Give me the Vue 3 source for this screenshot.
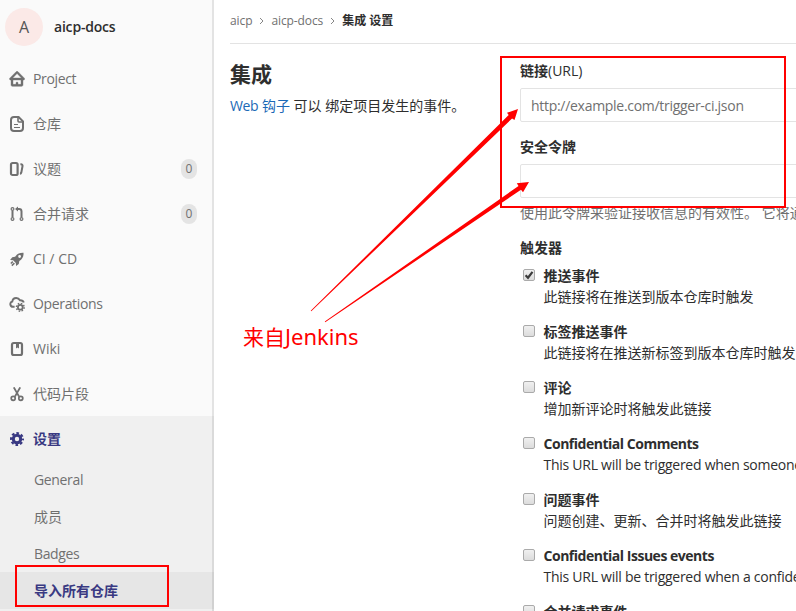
<script setup>
const nav = [
  { label: 'Project', icon: 'home', latin: true },
  { label: '仓库', icon: 'doc' },
  { label: '议题', icon: 'issues', count: 0 },
  { label: '合并请求', icon: 'merge', count: 0 },
  { label: 'CI / CD', icon: 'rocket' },
  { label: 'Operations', icon: 'cloud', latin: true },
  { label: 'Wiki', icon: 'book' },
  { label: '代码片段', icon: 'snippet' },
]
const sub = [
  { label: 'General', latin: true },
  { label: '成员' },
  { label: 'Badges', latin: true },
  { label: '导入所有仓库', active: true },
]
const triggers = [
  { title: '推送事件', text: '此链接将在推送到版本仓库时触发', checked: true },
  { title: '标签推送事件', text: '此链接将在推送新标签到版本仓库时触发' },
  { title: '评论', text: '增加新评论时将触发此链接' },
  { title: 'Confidential Comments', text: 'This URL will be triggered when someone', latin: true },
  { title: '问题事件', text: '问题创建、更新、合并时将触发此链接' },
  { title: 'Confidential Issues events', text: 'This URL will be triggered when a confide', latin: true },
  { title: '合并请求事件', text: '' },
]
</script>

<template>
  <div class="page">
    <aside class="sidebar">
      <div class="project">
        <span class="avatar">A</span>
        <span class="project-name">aicp-docs</span>
      </div>
      <nav>
        <a v-for="item in nav" :key="item.label" class="nav-item">
          <svg class="icon" viewBox="0 0 16 16">
            <path v-if="item.icon === 'home'" class="heavy" fill-rule="evenodd" d="M3.706 7h8.725L8.069 2.585 3.706 7zM7 13.369V12a1 1 0 0 1 2 0v1.369h3V9H4v4.369h3zM14 9v4.836c0 .833-.657 1.533-1.500 1.533h-9c-.843 0-1.500-.7-1.500-1.533V9h-.448a1.100 1.100 0 0 1-.783-1.873L6.934.887a1.500 1.500 0 0 1 2.269 0l6.165 6.240A1.100 1.100 0 0 1 14.585 9H14z" />
            <g v-else-if="item.icon === 'doc'" class="line">
              <path d="M5 1h4.600L14 5.400V12a3 3 0 0 1-3 3H5a3 3 0 0 1-3-3V4a3 3 0 0 1 3-3z" stroke-width="2" />
              <path d="M9 1.500V5a1 1 0 0 0 1 1h3.500" stroke-width="1.600" />
              <path d="M5 8.500h4M5 11.500h6" stroke-width="1.100" />
            </g>
            <g v-else-if="item.icon === 'issues'" class="line">
              <rect x="2" y="2" width="6.600" height="12" rx="1.600" stroke-width="2.200" />
              <path d="M11.400 3.200h.6a1.600 1.600 0 0 1 1.500 2l-1.200 6.400a2 2 0 0 1-1.200 1.400" stroke-width="2" />
            </g>
            <g v-else-if="item.icon === 'merge'" class="line">
              <path d="M3.500 5v6M12.500 11V5.400A2.400 2.400 0 0 0 10.100 3H8.500" stroke-width="2" />
              <circle cx="3.500" cy="3" r="1.400" stroke-width="1.200" />
              <circle cx="3.500" cy="13" r="1.400" stroke-width="1.200" />
              <circle cx="12.500" cy="13" r="1.400" stroke-width="1.200" />
              <path class="solid" d="M9 .4v5.200L6 3z" />
            </g>
            <g v-else-if="item.icon === 'rocket'">
              <path fill-rule="evenodd" d="M14.500 1.800c-3.600-.2-6.600 1-8.400 4L3.300 6.200 1.100 9l3 .2 2.700 2.700.3 3 2.700-2 .5-2.800C13.300 8.200 14.800 5.400 14.500 1.800zm-3.900 5.100a1.400 1.400 0 1 1 0-2.800 1.400 1.400 0 0 1 0 2.800z" />
              <path class="line" d="M3.800 10.600l-2 1.900M5.400 12.100l-2.600 2.500" stroke-width="1.500" />
            </g>
            <g v-else-if="item.icon === 'cloud'">
              <path class="line" d="M5.600 10.800H4.100A2.700 2.700 0 0 1 3.300 5.500C3.700 2.800 5.600 2 7.200 2c1.800 0 3 .9 3.700 2.200 2-.1 3.400.7 3.900 2.300" stroke-width="1.900" />
              <circle class="line" cx="11.300" cy="11.300" r="2.400" stroke-width="1.800" />
              <circle class="line" cx="11.300" cy="11.300" r="3.900" stroke-width="1.400" stroke-dasharray="1.550 1.513" />
            </g>
            <g v-else-if="item.icon === 'book'">
              <rect class="line" x="3" y="2" width="10" height="12" rx="1.800" stroke-width="2.200" />
              <path d="M7 2h3v5.600L8.500 6.400 7 7.600z" />
            </g>
            <g v-else class="line">
              <path d="M4.800 1.400l5.300 9.200M11.200 1.400L5.900 10.600" stroke-width="1.900" />
              <circle cx="4.200" cy="12.300" r="2" stroke-width="1.700" />
              <circle cx="11.800" cy="12.300" r="2" stroke-width="1.700" />
            </g>
          </svg>
          <span :class="{ latin: item.latin }">{{ item.label }}</span>
          <span v-if="item.count !== undefined" class="count">{{ item.count }}</span>
        </a>
      </nav>
      <section class="settings">
        <a class="nav-item current">
          <svg class="icon" viewBox="0 0 16 16">
            <circle class="line" cx="8" cy="8" r="3.700" stroke-width="3" />
            <circle class="line" cx="8" cy="8" r="5.900" stroke-width="2.200" stroke-dasharray="2.600 2.034" stroke-dashoffset="1.300" />
          </svg>
          <span>设置</span>
        </a>
        <a v-for="item in sub" :key="item.label" class="sub-item" :class="{ active: item.active, latin: item.latin }">{{ item.label }}</a>
      </section>
    </aside>

    <main class="content">
      <header class="crumbs">
        <span>aicp</span>
        <svg class="chevron" viewBox="0 0 5 8"><path d="M1 1l3 3-3 3" /></svg>
        <span>aicp-docs</span>
        <svg class="chevron" viewBox="0 0 5 8"><path d="M1 1l3 3-3 3" /></svg>
        <strong>集成 设置</strong>
      </header>
      <div class="columns">
        <section class="intro">
          <h1>集成</h1>
          <p><a><span class="latin">Web</span> 钩子</a> 可以 绑定项目发生的事件。</p>
        </section>
        <form class="form">
          <label class="label">链接<span class="semi">(URL)</span></label>
          <input class="field" placeholder="http://example.com/trigger-ci.json" />
          <label class="label second">安全令牌</label>
          <input class="field" />
          <p class="help">使用此令牌来验证接收信息的有效性。 它将通</p>
          <div class="label triggers">触发器</div>
          <div v-for="t in triggers" :key="t.title" class="trigger" :class="{ english: t.latin }">
            <span class="box">
              <svg v-if="t.checked" viewBox="0 0 10 10"><path d="M1.600 5.200l2.400 2.500L8.500 1.800" /></svg>
            </span>
            <div>
              <div class="trigger-title">{{ t.title }}</div>
              <div class="trigger-text">{{ t.text }}</div>
            </div>
          </div>
        </form>
      </div>
    </main>

    <svg class="marks" viewBox="0 0 796 611">
      <rect x="501" y="57" width="284" height="150" />
      <rect x="16" y="566" width="152" height="40" />
      <path d="M310.700 310.700L508.700 115 507 112.800 518 109 514.500 120 512.100 118.400 311.300 311.300z" />
      <path d="M324.800 321.600L518.500 186 516.800 183.300 529 182 523 192.300 521 189.700 325.200 322.200z" />
    </svg>
    <div class="note">来自<span class="note-name">Jenkins</span></div>
  </div>
</template>

<style>
body {
  overflow: hidden;
}
</style>

<style scoped>
.page {
  position: relative;
  display: flex;
  width: 796px;
  height: 611px;
  overflow: hidden;
  background: #fff;
  color: #2e2e2e;
  font: 14px/20px "Open Sans", "Noto Sans CJK SC", sans-serif;
}
.sidebar {
  box-sizing: border-box;
  flex: none;
  width: 214px;
  background: #fafafa;
  box-shadow: inset -2px 0 0 #e3e3e3;
}
.project {
  display: flex;
  align-items: center;
  gap: 11px;
  height: 52px;
  padding: 1px 0 0 5px;
  box-sizing: border-box;
  margin-bottom: 4px;
}
.avatar {
  width: 38px;
  height: 38px;
  border-radius: 50%;
  background: #fbe9e7;
  color: #555;
  font-size: 16px;
  font-weight: 500;
  line-height: 38px;
  text-align: center;
}
.project-name {
  padding-top: 1px;
  font-weight: 600;
  font-size: 14px;
  letter-spacing: -0.2px;
}
.nav-item {
  display: flex;
  align-items: center;
  height: 45px;
  padding: 0 17px 0 9px;
  color: #707070;
}
.latin {
  letter-spacing: -0.35px;
}
.icon {
  width: 16px;
  height: 16px;
  margin-right: 8px;
  fill: currentColor;
}
.heavy {
  stroke: currentColor;
  stroke-width: 0.4;
}
.line {
  fill: none;
  stroke: currentColor;
}
.solid {
  fill: currentColor;
  stroke: none;
}
.count {
  width: 16px;
  height: 20px;
  margin-left: auto;
  border-radius: 8px;
  background: #e4e4e4;
  font-size: 12px;
  text-align: center;
}
.settings {
  height: 195px;
  background: rgba(0, 0, 0, 0.04);
}
.current {
  color: #393982;
  font-weight: 600;
}
.sub-item {
  display: block;
  height: 37px;
  padding-left: 34px;
  color: #707070;
  line-height: 38px;
}
.sub-item.active {
  background: rgba(0, 0, 0, 0.04);
  color: #393982;
  font-weight: 600;
}
.content {
  flex: none;
  width: 582px;
  overflow: hidden;
  padding-left: 16px;
  box-sizing: border-box;
}
.crumbs {
  display: flex;
  align-items: center;
  height: 43px;
  padding-bottom: 2px;
  box-sizing: border-box;
  box-shadow: 0 1px 0 #e3e3e3;
  color: #707070;
  font-size: 12px;
  letter-spacing: -0.1px;
}
.crumbs strong {
  color: #2e2e2e;
  font-weight: 600;
  letter-spacing: 0;
}
.chevron {
  width: 5px;
  height: 8px;
  margin: 0 7px;
  fill: none;
  stroke: #868686;
}
.columns {
  display: grid;
  grid-template-columns: 290px 410px;
}
h1 {
  margin: 17px 0 0;
  font-size: 21px;
  line-height: 28px;
  font-weight: 700;
}
.intro p {
  margin: 8px 0 0;
}
.intro a {
  color: #1b69b6;
}
.form {
  padding-top: 18px;
}
.label {
  display: block;
  font-weight: 700;
  line-height: 20px;
}
.semi {
  font-weight: 500;
}
.field {
  display: block;
  box-sizing: border-box;
  width: 410px;
  height: 34px;
  margin: 7px 0 0;
  padding: 0 10px;
  border: 1px solid #e3e3e3;
  border-radius: 2px;
  outline: none;
  background: #fff;
  font: inherit;
  letter-spacing: -0.29px;
}
.field::placeholder {
  color: #707070;
  opacity: 1;
}
.second {
  margin-top: 15px;
}
.help {
  margin: 5px 0 0;
  color: #707070;
  white-space: nowrap;
}
.triggers {
  margin: 15px 0 7px;
}
.trigger {
  display: flex;
  height: 56px;
  padding-left: 3px;
  line-height: 21px;
  white-space: nowrap;
}
.box {
  box-sizing: border-box;
  flex: none;
  width: 12px;
  height: 12px;
  margin: 4px 8.5px 0 0;
  border: 1px solid #aaa;
  border-radius: 2px;
  background: linear-gradient(#f0f0f0, #dcdcdc);
}
.box svg {
  display: block;
  width: 10px;
  height: 10px;
  fill: none;
  stroke: #3c3c3c;
  stroke-width: 2.2;
}
.trigger-title {
  font-weight: 700;
}
.english .trigger-title {
  letter-spacing: -0.48px;
}
.english .trigger-text {
  letter-spacing: -0.26px;
}
.marks {
  position: absolute;
  inset: 0;
  width: 796px;
  height: 611px;
  fill: #f00;
}
.marks rect {
  fill: none;
  stroke: #f00;
  stroke-width: 2;
}
.note {
  position: absolute;
  left: 243px;
  top: 321px;
  color: #f00;
  font-size: 21px;
  line-height: 30px;
  white-space: nowrap;
}
.note-name {
  font-family: "Noto Sans", sans-serif;
  font-size: 22px;
}
</style>
